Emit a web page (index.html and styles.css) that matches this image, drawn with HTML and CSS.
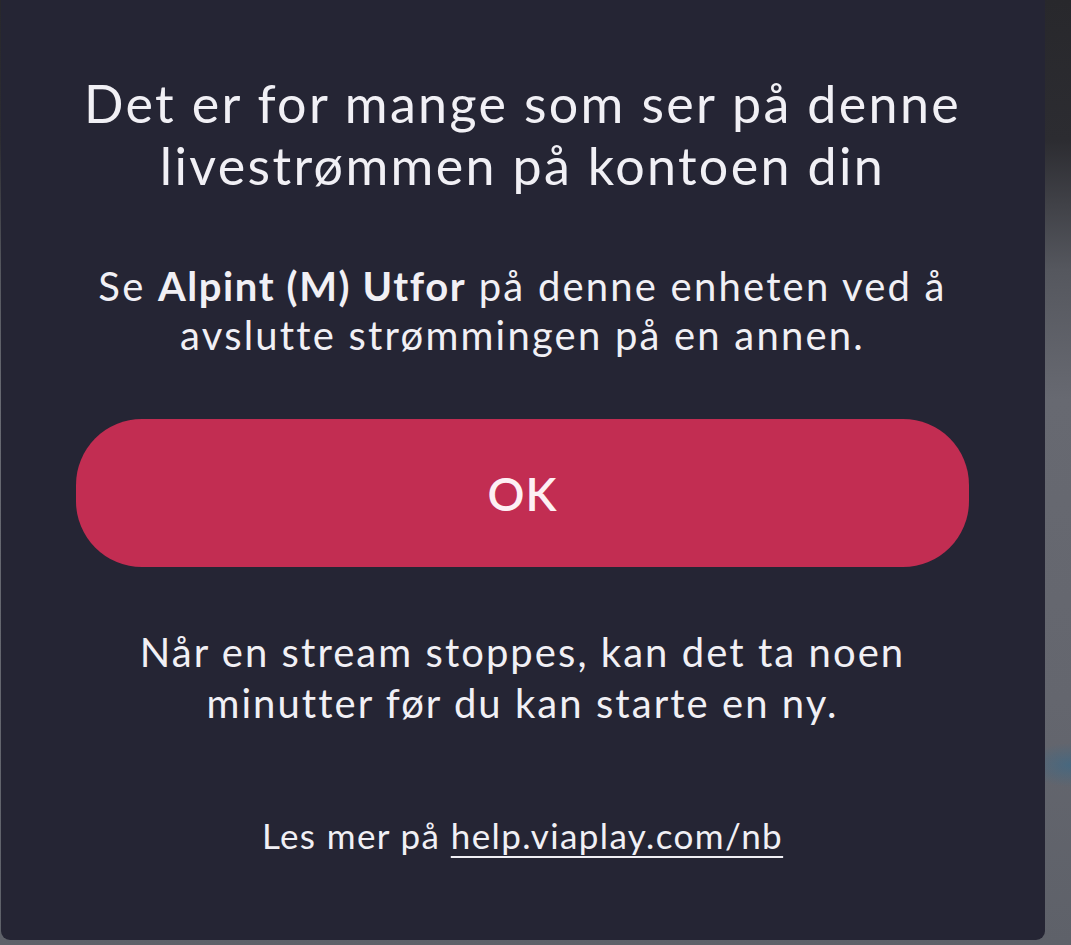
FILE: index.html
```html
<!DOCTYPE html>
<html lang="nb">
<head>
    <meta charset="UTF-8">
    <meta name="viewport" content="width=device-width, initial-scale=1.0">
    <title>For mange strømmer</title>
    <link rel="stylesheet" href="styles.css">
</head>
<body>
    <div class="backdrop">
        <div class="modal">
            <h1 class="modal-title">Det er for mange som ser på denne livestrømmen på kontoen din</h1>

            <p class="modal-text">Se <strong>Alpint (M) Utfor</strong> på denne enheten ved å avslutte strømmingen på en annen.</p>

            <button class="ok-btn" type="button">OK</button>

            <p class="modal-text note">Når en stream stoppes, kan det ta noen minutter før du kan starte en ny.</p>

            <p class="help">Les mer på <a href="#">help.viaplay.com/nb</a></p>
        </div>
    </div>
</body>
</html>
```

FILE: styles.css
```css
body {
    margin: 0;
    font-family: 'Lato', 'Open Sans', sans-serif;
    background: #5d6068;
    overflow: hidden;
}

.backdrop {
    height: 945px;
    background:
        radial-gradient(ellipse 45px 22px at 1071px 765px, rgba(60, 105, 135, 0.7), rgba(60, 105, 135, 0) 100%),
        linear-gradient(to bottom, #28282c 0px, #2c2c31 140px, #55575e 270px, #676971 400px, #64666e 700px, #5e6169 945px);
}

.modal {
    width: 1044px;
    height: 940px;
    margin-left: 1px;
    box-sizing: border-box;
    background: #252534;
    border-radius: 0 0 9px 9px;
    padding: 72px 76px 0 75px;
    display: flex;
    flex-direction: column;
    align-items: center;
    text-align: center;
    color: #f1f0f5;
}

.modal-title {
    margin: 0;
    font-size: 52px;
    font-weight: 400;
    line-height: 62px;
    letter-spacing: 2.35px;
    max-width: 900px;
}

.modal-text {
    margin: 66px 0 0;
    font-size: 40px;
    line-height: 49px;
    letter-spacing: 2.2px;
    max-width: 890px;
}

.modal-text strong {
    font-weight: 700;
    letter-spacing: 1.6px;
}

.ok-btn {
    margin-top: 59px;
    width: 100%;
    height: 148px;
    border: none;
    border-radius: 66px;
    background: #c22d52;
    color: #fdf0f4;
    font-family: inherit;
    font-size: 46px;
    font-weight: 600;
    letter-spacing: 1px;
    cursor: pointer;
}

.note {
    margin-top: 60px;
    line-height: 51px;
    letter-spacing: 2.05px;
    max-width: 800px;
}

.help {
    margin: 86px 0 0;
    font-size: 35px;
    line-height: 40px;
    letter-spacing: 1.4px;
}

.help a {
    color: inherit;
    text-decoration: underline;
    text-underline-offset: 7px;
    text-decoration-thickness: 2px;
}
```
